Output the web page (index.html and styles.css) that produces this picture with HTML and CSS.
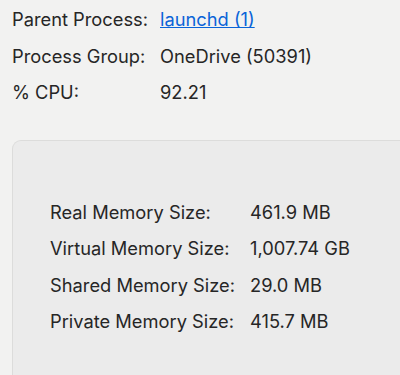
FILE: index.html
```html
<!DOCTYPE html>
<html>
  <head>
    <title>Process Info</title>
    <link rel="stylesheet" href="styles.css">
  </head>
  <body>
    <div class="info">
      <div class="row">
        <span class="label">Parent Process:</span>
        <a class="value link" href="#">launchd (1)</a>
      </div>
      <div class="row">
        <span class="label">Process Group:</span>
        <span class="value">OneDrive (50391)</span>
      </div>
      <div class="row">
        <span class="label">% CPU:</span>
        <span class="value">92.21</span>
      </div>
    </div>

    <div class="panel">
      <div class="mem-row">
        <span class="label">Real Memory Size:</span>
        <span class="value">461.9 MB</span>
      </div>
      <div class="mem-row">
        <span class="label">Virtual Memory Size:</span>
        <span class="value">1,007.74 GB</span>
      </div>
      <div class="mem-row">
        <span class="label">Shared Memory Size:</span>
        <span class="value">29.0 MB</span>
      </div>
      <div class="mem-row">
        <span class="label">Private Memory Size:</span>
        <span class="value">415.7 MB</span>
      </div>
    </div>
  </body>
</html>
```

FILE: styles.css
```css
html, body{
    margin: 0;
    height: 100%;
}

body{
    display: flex;
    flex-direction: column;
    background-color: #f2f2f1;
    font-family: "Inter", "Liberation Sans", sans-serif;
    font-size: 18.3px;
    color: #262626;
    overflow: hidden;
}

.info{
    padding: 1px 0 0 12px;
}

.row{
    display: grid;
    grid-template-columns: 148px auto;
    height: 36.5px;
    align-items: center;
}

.link{
    color: #0a64d8;
    text-decoration: underline;
}

/* panel runs off the right and bottom edge, so no border there */
.panel{
    flex: 1;
    margin: 29px 0 0 12px;
    padding: 53px 0 0 37px;
    background-color: #ebebeb;
    border: 1px solid #dcdcdb;
    border-right: 0;
    border-bottom: 0;
    border-radius: 9px 0 0 0;
}

.mem-row{
    display: grid;
    grid-template-columns: 200px auto;
    height: 36.5px;
    align-items: center;
}
```
